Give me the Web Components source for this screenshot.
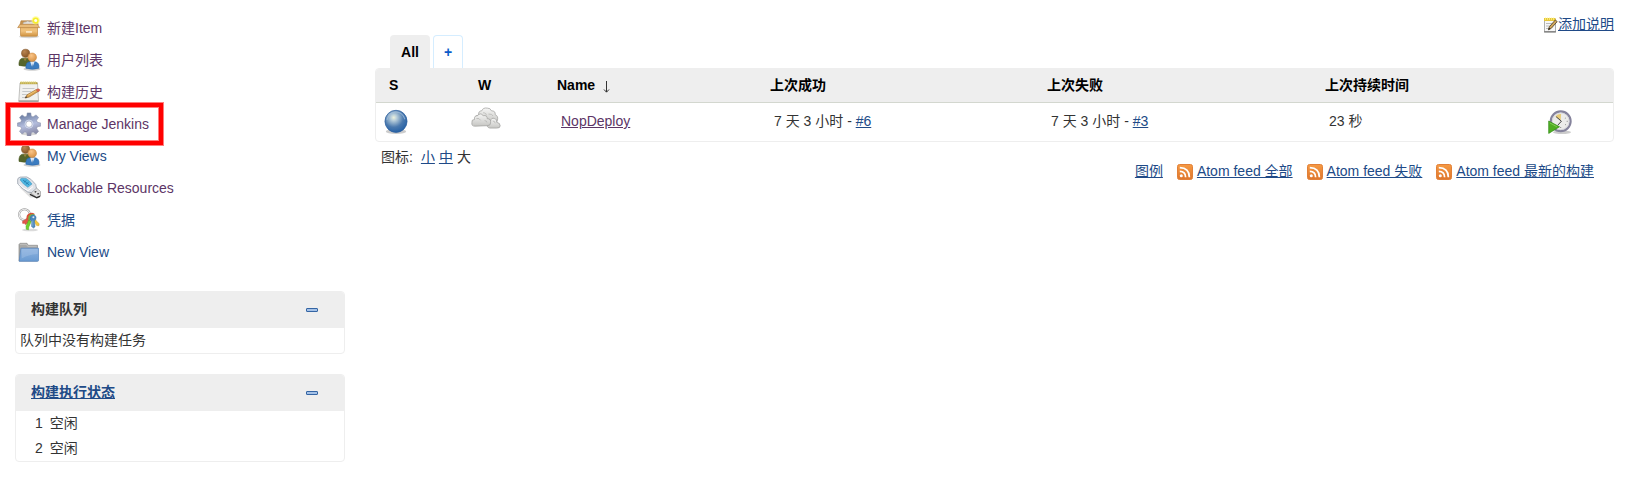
<!DOCTYPE html>
<html lang="zh-CN">
<head>
<meta charset="utf-8">
<title>Dashboard [Jenkins]</title>
<style>
body{margin:0;background:#fff;color:#333;font:14px/20px "Liberation Sans","Noto Sans CJK SC",sans-serif}
</style>
</head>
<body>
<jenkins-dashboard></jenkins-dashboard>
<script>
const ICONS = {
package:`<svg viewBox="0 0 24 24"><defs><linearGradient id="a" x2="0" y2="1"><stop stop-color="#e9b96e"/><stop offset=".5" stop-color="#f0c27c"/><stop offset="1" stop-color="#d0913f"/></linearGradient></defs><ellipse cx="12" cy="20.6" rx="10" ry="1.7" fill="#bbb" opacity=".6"/><path d="M4 4.8h16.2l1 4.2H3z" fill="#c79452" stroke="#b07a35" stroke-width=".6"/><path d="M5.8 8.5q0-3 3.2-2.6 1.7-1.6 3.4-.2 2.4-1 3.4.6 2.2.2 2 2.2z" fill="#e4e1dc" stroke="#a9a59c" stroke-width=".6"/><path d="M3.5 10h17v9.2a1 1 0 0 1-1 1h-15a1 1 0 0 1-1-1z" fill="url(#a)" stroke="#c08a42" stroke-width=".7"/><path d="M3 8.3.7 11.6h21.9l-2.2-3.3z" fill="#e9bb78" stroke="#b98242" stroke-width=".7"/><path d="M9 15h6v1.8H9z" fill="#fae5c2"/><circle cx="18.7" cy="4.4" r="4.2" fill="#fff980" opacity=".7"/><circle cx="18.7" cy="4.4" r="3" fill="#f6ef2b"/><circle cx="18.7" cy="4.4" r="1.5" fill="#fffff0"/></svg>`,
people:`<svg viewBox="0 0 24 24"><defs><radialGradient id="b" cx=".35" cy=".3" r=".8"><stop stop-color="#b98552"/><stop offset="1" stop-color="#825022"/></radialGradient><radialGradient id="c" cx=".4" cy=".3" r=".8"><stop stop-color="#fbc587"/><stop offset="1" stop-color="#d28b3e"/></radialGradient></defs><ellipse cx="15" cy="21" rx="8.5" ry="1.8" fill="#bbb" opacity=".7"/><path d="M2 17.4Q1.6 11 5.4 10.2h6.2q2.4 1 2 7.2-6 1.6-11.6 0z" fill="#56652b" stroke="#47571f" stroke-width=".6"/><path d="m6.5 10.2 1.5 3 2-3z" fill="#95833d"/><circle cx="8.6" cy="5.3" r="4.1" fill="url(#b)" stroke="#7c4e22" stroke-width=".5"/><path d="M8.9 20.2Q8.5 14.3 12.6 13.8h5.6q4.4.7 3.7 6.4-6.3 2-13 0z" fill="#3b7cc0" stroke="#2a65a8" stroke-width=".6"/><path d="m13.2 13.8 2.1 5.8 2.3-5.8z" fill="#dce8f5"/><path d="m15.3 15.2-.5 4.4h1.1z" fill="#3a6da8"/><circle cx="15.2" cy="9.3" r="4.3" fill="url(#c)" stroke="#c98237" stroke-width=".5"/></svg>`,
notepad:`<svg viewBox="0 0 24 24"><path d="M3 3h17.5l1 17.8h-19.7z" fill="#f1f1ef" stroke="#b2b3b0" stroke-width=".8"/><path d="M1.6 20.4h20v1.8h-20z" fill="#a3a5a1"/><path d="M3 2.2h17.4v2H3z" fill="#b9a544"/><path d="M4.2 1v3m2-3v3m2-3v3m2-3v3m2-3v3m2-3v3m2-3v3m2-3v3" stroke="#e3d781" stroke-width=".8"/><path d="M5.5 8.5h12M5.3 11.5h9M5 14.5h5M5 17.5h3" stroke="#c6c9ca"/><path d="m8 18.1 2-3.3 9.3-5.2 1.9 1.9-9 5.6z" fill="#d9a14b" stroke="#94632b" stroke-width=".6"/><path d="m8 18.1 1.1-1.9 1.2 1.2z" fill="#333"/><path d="m19 9.8 1.4-.9q1.6-.2 2.3.6.5.9-.2 1.4l-1.6 1z" fill="#dc6650" stroke="#b94f38" stroke-width=".4"/><path d="m11 15.4 8.2-4.8" stroke="#f1cc85" stroke-width=".8"/></svg>`,
gear:`<svg viewBox="0 0 24 24"><defs><linearGradient id="d" x1=".4" x2=".7" y2="1"><stop stop-color="#66799f"/><stop offset=".5" stop-color="#b3bddd"/><stop offset="1" stop-color="#807f9c"/></linearGradient></defs><ellipse cx="12" cy="22" rx="8" ry="1.5" fill="#bbb" opacity=".6"/><path fill-rule="evenodd" d="M10.2.9h3.6l.4 3.2 1.8.8 3-2 2.6 2.5-2 2.9.8 2 3.2.6v3.3l-3.2.5-.8 1.9 2 2.8-2.6 2.6-2.9-2-1.8.8-.5 3.2h-3.5l-.5-3.2-1.9-.8-2.8 2-2.6-2.6 2-2.8-.8-1.9-3.2-.5v-3.3l3.2-.6.8-2-2-2.9 2.6-2.5 2.8 2 1.9-.8zM12 8.9a3.2 3.2 0 1 0 0 6.4 3.2 3.2 0 0 0 0-6.4z" fill="url(#d)" stroke="#828aa5" stroke-width=".5"/><circle cx="12" cy="12.1" r="4" fill="none" stroke="#dce3f2" stroke-width=".8"/></svg>`,
usb:`<svg viewBox="0 0 24 24"><path d="m2 11 11 10.4h9l-7-7z" fill="#ccc" opacity=".6"/><path d="m14.6 14 4-2.8 5 4.4-.3 4.4-3.4 1.6-5.6-4.2z" fill="#dedede" stroke="#888" stroke-width=".6"/><path d="m12.8 17.6 6.8 3.4 3.6-1.5v1.4l-3.4 1.5-7-3.4z" fill="#2b2b2b"/><path d="m17.2 15.8 1.4-.9 1.1.9-1.4 1zm2.7 2 1.3-.8 1.1.8-1.3 1z" fill="#333"/><path d="M.6 5Q0 2 3 1.1L9.7.9q3.8 1 9 7.5l.7 3.8-4.9 4.4-3.6-.4Q4.6 12.4.8 8z" fill="#e0e3e9" stroke="#8f99a5" stroke-width=".7"/><path d="M3.2 4Q3.2 2.4 5 2.2l4.2.3q3.3 2 5.8 5.5l-4.2 3.3Q6 8.4 3.2 4z" fill="#4fb7e2" stroke="#3890bb" stroke-width=".5"/><path d="m6 4 6 4.8M7 6.2l2.4-1.6m-.6 3.6 2.8-1.9" stroke="#1f78ab" stroke-width=".8"/><path d="M2.2 8q3.5 4.4 8.8 6.6l5-4" fill="none" stroke="#fff"/></svg>`,
keys:`<svg viewBox="0 0 24 24"><ellipse cx="13" cy="22" rx="8" ry="1.3" fill="#ccc" opacity=".7"/><circle cx="7.5" cy="6.6" r="5.4" fill="none" stroke="#929292" stroke-width="2"/><circle cx="7.5" cy="6.6" r="5.4" fill="none" stroke="#f0f0f0" stroke-width="1.1"/><path d="m11.5 9.5-6 3.9.2 2 2-.2.6 1.4 5.2-3.1z" fill="#e0574a" stroke="#c43e35" stroke-width=".5"/><path d="m17 9 2 3.6 3.2 3.1-.3 2-2.2-.1-1.7-2.5-2-3.6z" fill="#f0c63e" stroke="#c69d32" stroke-width=".5"/><path d="m11.7 12-2.7 6 .2 3.2 2.3.6.3-2.7 2.4-5.6z" fill="#6fd02c" stroke="#51a425" stroke-width=".5"/><path d="M9.6 11.4Q8.8 6.5 12.4 5.2q2.8-1.4 5.4.8l-5.6 6z" fill="#db5039"/><path d="M11.4 12q-.8-4.7 2.3-5.6 2-.7 4.1 0L14.4 12z" fill="#74b546"/><path d="M13.1 12q-.4-4 2-4.9 3.2-.7 4 1.9.3 2.6-1.7 4l.6 5.8-1.5 1.2-1.9-1.4.2-5z" fill="#4a86bd" stroke="#356c9f" stroke-width=".5"/><path d="M15.8 12.5v6" stroke="#86b4dd" stroke-width=".8"/><circle cx="16.4" cy="9.3" r="1" fill="#d9e6f2"/></svg>`,
folder:`<svg viewBox="0 0 24 24"><defs><linearGradient id="h" x2="0" y2="1"><stop stop-color="#8eb3df"/><stop offset="1" stop-color="#6a9bd2"/></linearGradient></defs><path d="M2 21V4.5L3 3.3h7l1.2 2h9.3V21z" fill="#a8a8a6" stroke="#8a8a88" stroke-width=".7"/><path d="M3 4.3h6.5l1.2 2h9" fill="none" stroke="#c8c8c6" stroke-width=".8"/><path d="M3.9 8.2h17.6v12.4q0 .7-1 .7H2.2z" fill="url(#h)" stroke="#5484bd" stroke-width=".7"/><path d="M4.7 9.1h16v5q-8 .2-16 4.5z" fill="#a9c6e8" opacity=".4"/></svg>`,
ball:`<svg viewBox="0 0 28 28"><defs><radialGradient id="e" cx=".4" cy=".33" r=".7"><stop stop-color="#eef2dc"/><stop offset=".2" stop-color="#b7cdda"/><stop offset=".62" stop-color="#4a79ae"/><stop offset="1" stop-color="#2460a5"/></radialGradient></defs><ellipse cx="14" cy="24.2" rx="11" ry="2.6" fill="#bbb" opacity=".75"/><circle cx="14" cy="13.3" r="11.9" fill="url(#e)" stroke="#2b5f9e" stroke-width=".8"/><path d="M4.3 11.7Q7 3.2 14 3.3q7 .1 9.6 7.7" fill="none" stroke="#a8c2df" stroke-width="1.2" opacity=".65"/></svg>`,
clouds:`<svg viewBox="0 0 32 24"><defs><linearGradient id="f" x2="0" y2="1"><stop stop-color="#f6f6f5"/><stop offset="1" stop-color="#c6c6c3"/></linearGradient></defs><g fill="url(#f)" stroke="#a4a4a1" stroke-width=".8"><path d="M8 16q-4-.5-3-4-.5-3.5 3.1-3.5Q8 4 11.5 4 13 .3 17.5 1.2q3-.3 4.2 2.8 4.3-.1 3.9 4 3.4 1.4 2.4 5.6 0 3-4 2.7z"/><path d="M20 22q-3.8-.8-2-4-.5-3.5 2.8-3.5.6-3.8 4.2-2.4 2.8.3 2.2 3.9 3.5.5 3.6 3.6 0 2.6-3.6 2.4z"/><path d="M4.5 20Q.7 20.1 1.3 16.3q-.5-3.5 2.7-3.2-.7-4.2 3.2-4Q10 5.3 13 9q4.5-.6 4.3 3.2 4.2 0 3.5 4.5 0 2.8-3.6 2.8z"/></g><path d="M13 6q4 .2 3 3m2.6-1.6q3.8-.4 4.8 2M6 12q3-.8 4.5 2m4 .2q2.4 0 2.5 2m6-1.6q2.4 0 2.6 2.4" fill="none" stroke="#b9b9b7" stroke-width=".9"/></svg>`,
clock:`<svg viewBox="0 0 24 24"><ellipse cx="14" cy="22.2" rx="9" ry="1.7" fill="#aaa" opacity=".6"/><circle cx="12.7" cy="11.3" r="9.9" fill="#ececea" stroke="#85839c" stroke-width="2.2"/><circle cx="12.7" cy="11.3" r="8.4" fill="none" stroke="#d2d2d8" stroke-width=".8"/><path d="m12.7 10.3-5.4-3.8q2.2-2.6 5.8-2.4z" fill="#e8cb78"/><path d="m8.2 6.8 5.2 4.4-3.6 4" fill="none" stroke="#444" stroke-width="1"/><path d="M19.7 11.3h-1M12.7 18v-1m5-9-.8.5m1 6.4-.8-.5" stroke="#888"/><path d="m.7 11 10.8 5.8-10.8 6.6z" fill="#4fae22" stroke="#318c17" stroke-width=".7"/><path d="m1.8 12.9 7 3.8" stroke="#8fd45e" stroke-width=".8"/></svg>`,
edit:`<svg viewBox="0 0 16 16"><path d="M1.5 2h11v13h-11z" fill="#f7f7f7" stroke="#9a9c99" stroke-width=".8"/><path d="M1 14h12v1.5H1z" fill="#888"/><path d="M1 1h11.5v3H1z" fill="#e6c63b"/><path d="M2.5.5V3m2-2.5V3m2-2.5V3m2-2.5V3m2-2.5V3" stroke="#fff480" stroke-width=".8"/><path d="M3 6.5h7M3 9h5m-5 2.5h3" stroke="#bbb"/><path d="m5.4 12.8.9-3 6-6.8 1.9 1.6-6 6.8z" fill="#d0a659" stroke="#5a4830" stroke-width=".9"/><path d="m5.4 12.8.6-2 1.3 1.3z" fill="#111"/></svg>`,
rss:`<svg viewBox="0 0 16 16"><defs><linearGradient id="g" x2="0" y2="1"><stop stop-color="#f69a43"/><stop offset="1" stop-color="#df762d"/></linearGradient></defs><rect x=".5" y=".5" width="15" height="15" rx="2" fill="url(#g)" stroke="#e28038"/><circle cx="4.3" cy="11.8" r="1.5" fill="#fff"/><path d="M2.8 7.4q5.7.1 5.8 5.8M2.8 3.7q9.4.2 9.6 9.5" fill="none" stroke="#fff" stroke-width="1.7"/></svg>`,
minus:`<svg viewBox="0 0 12 4"><rect x=".5" y=".5" width="11" height="3" rx=".4" fill="#a4c1e7" stroke="#3465a4"/></svg>`
};
const define = (name, markup) => {
  const t = document.createElement('template');
  t.innerHTML = markup;
  customElements.define(name, class extends HTMLElement {
    constructor(){ super(); this.attachShadow({mode:'open'}).append(t.content.cloneNode(true)); }
  });
};
customElements.define('j-icon', class extends HTMLElement {
  connectedCallback(){
    if (this.shadowRoot) return;
    this.attachShadow({mode:'open'}).innerHTML =
      `<style>:host{display:block;flex:none;width:var(--w,24px);height:var(--h,var(--w,24px))}svg{display:block;width:100%;height:100%}</style>${ICONS[this.getAttribute('name')]}`;
  }
});
define('j-link', `<style>:host{display:inline;color:var(--link,#204a87)}a{color:inherit;text-decoration:underline}</style><a><slot></slot></a>`);
define('side-task', `<style>
:host{display:flex;align-items:center;height:32px;gap:6px;padding-left:17px;color:#204a87;position:relative}
:host([visited]){color:#5c3566}
.mark{display:none}
:host([marked]) .mark{display:block;position:absolute;left:6px;top:-5px;width:149px;height:34px;border:4px solid #f00;box-shadow:0 0 0 1px #ff7d7d,inset 0 0 0 1px #ff7d7d;z-index:1}
span{line-height:20px}
</style><slot name="icon"></slot><span><slot></slot></span><i class="mark"></i>`);
define('side-pane', `<style>
:host{display:block;box-sizing:border-box;width:330px;margin-left:15px;border:1px solid #eee;border-radius:4px;overflow:hidden}
header{display:flex;box-sizing:border-box;justify-content:space-between;align-items:center;height:36px;background:#eee;padding:0 26px 2px 15px;font-weight:700}
j-icon{--w:12px;--h:4px;margin-top:2px}
</style><header><slot name="title"></slot><j-icon name="minus"></j-icon></header><slot></slot>`);
define('executor-row', `<style>:host{display:flex;height:25px;align-items:center;padding-left:19px;gap:7px;margin-top:-1px;margin-bottom:1px}</style><slot name="n"></slot><slot></slot>`);
define('view-tabs', `<style>
:host{display:flex;gap:3px;padding-left:15px;height:33px}
b{box-sizing:border-box;display:flex;align-items:center;justify-content:center;border-radius:4px 4px 0 0;color:#000}
.on{width:40px;background:#eee}.add{width:30px;border:1px solid #d5edff;border-bottom:0;color:#0b5cc9}
</style><b class="on">All</b><b class="add">+</b>`);
define('job-row', `<style>
:host{display:grid;box-sizing:border-box;grid-template-columns:87px 81px 213px 277px 278px 219px 1fr;align-items:center;height:38px;padding:0 0 2px 8px}
:host([head]){height:34px;background:#eee;color:#000;font-weight:700;border-bottom:1px solid #d3d7cf;padding-left:13px;grid-template-columns:89px 79px 213px 277px 278px 1fr}
</style><slot></slot>`);
define('job-table', `<style>
:host{display:block;box-sizing:border-box;border:1px solid #eee;border-radius:4px;overflow:hidden;height:74px}
.arrow{display:inline-block;width:7px;height:12px;margin-left:8px;vertical-align:-3px}
span{white-space:nowrap}
.cell{padding-left:9px}
</style>
<job-row head><span>S</span><span>W</span><span>Name<svg class="arrow" viewBox="0 0 7 12"><path d="M3.5 0v11M1 8.5l2.5 2.7L6 8.5" fill="none" stroke="#333"/></svg></span><span>上次成功</span><span>上次失败</span><span>上次持续时间</span></job-row>
<job-row><j-icon name="ball" style="--w:26px;margin:2px 0 0 -1px"></j-icon><j-icon name="clouds" style="--w:32px;--h:23px;margin:-5px 0 0 -1px"></j-icon><span class="cell"><j-link style="--link:#5c3566">NopDeploy</j-link></span><span class="cell">7 天 3 小时 - <j-link>#6</j-link></span><span class="cell">7 天 3 小时 - <j-link>#3</j-link></span><span class="cell">23 秒</span><j-icon name="clock" style="--w:24px;margin:1px 0 0 9px"></j-icon></job-row>`);
define('feed-bar', `<style>
:host{display:flex;justify-content:flex-end;align-items:center;padding-right:20px;height:20px;white-space:nowrap}
j-icon{--w:16px;margin:2px 4px 0 14px}
</style><j-link>图例</j-link><j-icon name="rss"></j-icon><j-link>Atom feed 全部</j-link><j-icon name="rss"></j-icon><j-link>Atom feed 失败</j-link><j-icon name="rss"></j-icon><j-link>Atom feed 最新的构建</j-link>`);
define('jenkins-dashboard', `<style>
:host{display:grid;grid-template-columns:375px 1239px;height:502px;overflow:hidden}
nav{padding-top:12px}
side-pane.q{margin-top:23px;height:63px}
side-pane.e{margin-top:20px;height:88px}
.empty{padding:2px 0 0 4px}
.desc{display:flex;justify-content:flex-end;align-items:center;height:20px;padding:14px 0 1px}
.desc j-icon{--w:16px;margin:2px -1px 0 0}
.sizes{display:flex;height:20px;padding:5px 0 0 6px}
.sizes span{margin-right:8px}.sizes j-link{margin-right:4px}
feed-bar{margin-top:-6px}
</style>
<aside><nav>
<side-task visited><j-icon slot="icon" name="package"></j-icon>新建Item</side-task>
<side-task visited><j-icon slot="icon" name="people"></j-icon>用户列表</side-task>
<side-task visited><j-icon slot="icon" name="notepad"></j-icon>构建历史</side-task>
<side-task visited marked><j-icon slot="icon" name="gear"></j-icon>Manage Jenkins</side-task>
<side-task><j-icon slot="icon" name="people"></j-icon>My Views</side-task>
<side-task visited><j-icon slot="icon" name="usb"></j-icon>Lockable Resources</side-task>
<side-task><j-icon slot="icon" name="keys"></j-icon>凭据</side-task>
<side-task><j-icon slot="icon" name="folder"></j-icon>New View</side-task>
</nav>
<side-pane class="q"><span slot="title">构建队列</span><div class="empty">队列中没有构建任务</div></side-pane>
<side-pane class="e"><j-link slot="title">构建执行状态</j-link><executor-row><span slot="n">1</span>空闲</executor-row><executor-row><span slot="n">2</span>空闲</executor-row></side-pane>
</aside>
<main><div class="desc"><j-icon name="edit"></j-icon><j-link>添加说明</j-link></div>
<view-tabs></view-tabs><job-table></job-table>
<div class="sizes"><span>图标:</span><j-link>小</j-link><j-link>中</j-link>大</div>
<feed-bar></feed-bar></main>`);
</script>
</body>
</html>
